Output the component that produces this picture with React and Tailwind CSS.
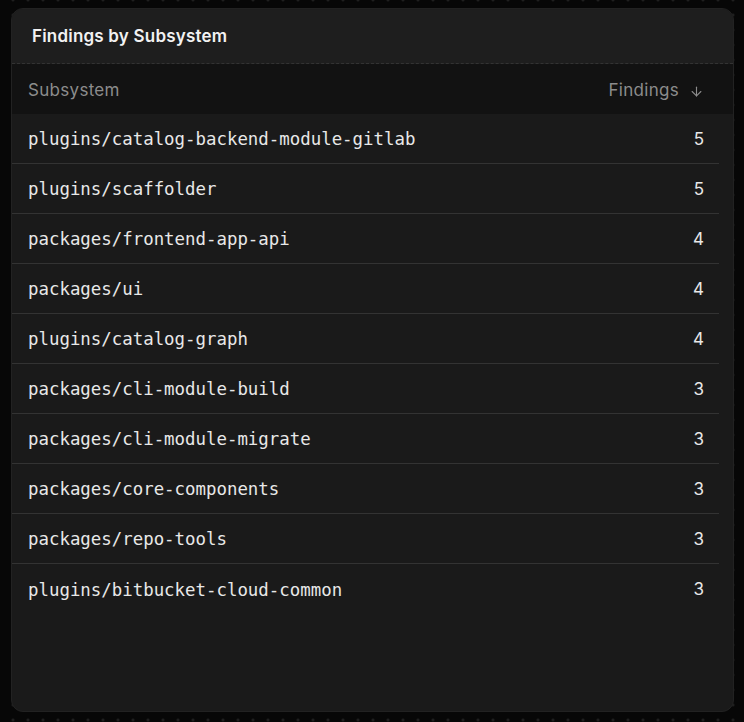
import React from 'react';
import { ArrowDown } from 'lucide-react';

const rows = [
    { name: 'plugins/catalog-backend-module-gitlab', count: 5 },
    { name: 'plugins/scaffolder', count: 5 },
    { name: 'packages/frontend-app-api', count: 4 },
    { name: 'packages/ui', count: 4 },
    { name: 'plugins/catalog-graph', count: 4 },
    { name: 'packages/cli-module-build', count: 3 },
    { name: 'packages/cli-module-migrate', count: 3 },
    { name: 'packages/core-components', count: 3 },
    { name: 'packages/repo-tools', count: 3 },
    { name: 'plugins/bitbucket-cloud-common', count: 3 },
];

export default function App() {
    return (
        <div
            className="min-h-screen flex flex-col pl-[11px] pr-[10px] pt-2 pb-[10px] bg-[#070707] bg-[radial-gradient(circle,#262626_1px,transparent_1.5px)] bg-[size:15px_15px] bg-[position:5.5px_-7.5px]"
            style={{ fontFamily: 'Inter, "Noto Sans", sans-serif' }}
        >
            <div className="flex-1 flex flex-col rounded-[12px] border border-[#222] bg-[#1a1a1a] overflow-hidden h-[704px]">
                {/* Header */}
                <div className="h-[55px] flex items-center px-5 pt-[2px] bg-[#1e1e1e] border-b border-dashed border-[#333]">
                    <h2 className="text-[17px] font-semibold text-[#f2f2f2] tracking-[0.2px]">Findings by Subsystem</h2>
                </div>

                {/* Table */}
                <div className="flex flex-col">
                    <div className="h-[50px] flex items-center bg-[#121212] pl-4 pr-[29px] pt-1 text-[17px] text-[#8c8c8c] tracking-[0.3px]">
                        <span className="flex-1">Subsystem</span>
                        <span className="flex items-center gap-[10px]">
                            Findings
                            <ArrowDown className="w-[15px] h-[15px]" strokeWidth={1.75} />
                        </span>
                    </div>
                    <div className="mr-[14px]">
                        {rows.map((row, i) => (
                            <div
                                key={row.name}
                                className={`h-[50px] flex items-center pl-4 pr-[15px] pt-[2px] ${i < rows.length - 1 ? 'border-b border-[#333]' : ''}`}
                            >
                                <span
                                    className="flex-1 text-[17.4px] text-[#e8e8e8]"
                                    style={{ fontFamily: '"DejaVu Sans Mono", monospace' }}
                                >
                                    {row.name}
                                </span>
                                <span className="text-[17px] text-[#e8e8e8]">{row.count}</span>
                            </div>
                        ))}
                    </div>
                </div>
            </div>
        </div>
    );
}
